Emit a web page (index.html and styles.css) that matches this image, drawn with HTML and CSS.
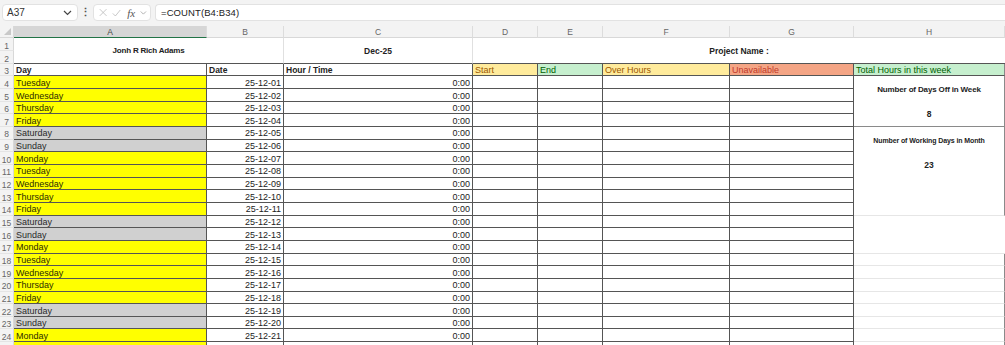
FILE: index.html
```html
<!DOCTYPE html>
<html>
<head>
<meta charset="utf-8">
<link rel="stylesheet" href="styles.css">
</head>
<body>
<div class="topbar">
  <div class="namebox"><span>A37</span>
    <svg class="chev" width="9" height="6" viewBox="0 0 9 6"><path d="M1 1l3.5 3.5L8 1" fill="none" stroke="#444" stroke-width="1.2"/></svg>
  </div>
  <div class="dots">⋮</div>
  <div class="fxbox">
    <svg width="11" height="11" viewBox="0 0 11 11"><path d="M1 1l9 9M10 1l-9 9" stroke="#b5b5b5" stroke-width="1"/></svg>
    <svg width="12" height="10" viewBox="0 0 12 10"><path d="M1 5.5l3.5 3.5L11 1" fill="none" stroke="#b5b5b5" stroke-width="1"/></svg>
    <span class="fx">fx</span>
    <svg width="9" height="6" viewBox="0 0 9 6"><path d="M1 1l3.5 3.5L8 1" fill="none" stroke="#999" stroke-width="1"/></svg>
  </div>
  <div class="formula">=COUNT(B4:B34)</div>
</div>
<div class="sheet">
  <div class="corner"><span class="tri"></span></div>
  <div class="ch sel">A</div><div class="ch">B</div><div class="ch">C</div><div class="ch">D</div><div class="ch">E</div><div class="ch">F</div><div class="ch">G</div><div class="ch last">H</div>

  <div class="rh">1</div>
  <div class="title t-name">Jonh R Rich Adams</div>
  <div class="title t-month">Dec-25</div>
  <div class="title t-proj">Project Name :</div>
  <div class="rh">2</div>

  <div class="rh">3</div>
  <div class="c hd">Day</div><div class="c hd">Date</div><div class="c hd">Hour / Time</div>
  <div class="c neutral">Start</div><div class="c good">End</div><div class="c neutral">Over Hours</div><div class="c bad">Unavailable</div><div class="c good hlast">Total Hours in this week</div>

  <div class="rh">4</div><div class="c day wk">Tuesday</div><div class="c num">25-12-01</div><div class="c num">0:00</div><div class="c"></div><div class="c"></div><div class="c"></div><div class="c"></div>
  <div class="h box span2 lbl">Number of Days Off in Week</div>
  <div class="rh">5</div><div class="c day wk">Wednesday</div><div class="c num">25-12-02</div><div class="c num">0:00</div><div class="c"></div><div class="c"></div><div class="c"></div><div class="c"></div>
  <div class="rh">6</div><div class="c day wk">Thursday</div><div class="c num">25-12-03</div><div class="c num">0:00</div><div class="c"></div><div class="c"></div><div class="c"></div><div class="c"></div>
  <div class="h box span2 val closed">8</div>
  <div class="rh">7</div><div class="c day wk">Friday</div><div class="c num">25-12-04</div><div class="c num">0:00</div><div class="c"></div><div class="c"></div><div class="c"></div><div class="c"></div>
  <div class="rh">8</div><div class="c day we">Saturday</div><div class="c num">25-12-05</div><div class="c num">0:00</div><div class="c"></div><div class="c"></div><div class="c"></div><div class="c"></div>
  <div class="h box span2 lbl small">Number of Working Days in Month</div>
  <div class="rh">9</div><div class="c day we">Sunday</div><div class="c num">25-12-06</div><div class="c num">0:00</div><div class="c"></div><div class="c"></div><div class="c"></div><div class="c"></div>
  <div class="rh">10</div><div class="c day wk">Monday</div><div class="c num">25-12-07</div><div class="c num">0:00</div><div class="c"></div><div class="c"></div><div class="c"></div><div class="c"></div>
  <div class="h box span2 val">23</div>
  <div class="rh">11</div><div class="c day wk">Tuesday</div><div class="c num">25-12-08</div><div class="c num">0:00</div><div class="c"></div><div class="c"></div><div class="c"></div><div class="c"></div>
  <div class="rh">12</div><div class="c day wk">Wednesday</div><div class="c num">25-12-09</div><div class="c num">0:00</div><div class="c"></div><div class="c"></div><div class="c"></div><div class="c"></div>
  <div class="h box span3 grid"></div>
  <div class="rh">13</div><div class="c day wk">Thursday</div><div class="c num">25-12-10</div><div class="c num">0:00</div><div class="c"></div><div class="c"></div><div class="c"></div><div class="c"></div>
  <div class="rh">14</div><div class="c day wk">Friday</div><div class="c num">25-12-11</div><div class="c num">0:00</div><div class="c"></div><div class="c"></div><div class="c"></div><div class="c"></div>
  <div class="rh">15</div><div class="c day we">Saturday</div><div class="c num">25-12-12</div><div class="c num">0:00</div><div class="c"></div><div class="c"></div><div class="c"></div><div class="c"></div>
  <div class="h span3 grid"></div>
  <div class="rh">16</div><div class="c day we">Sunday</div><div class="c num">25-12-13</div><div class="c num">0:00</div><div class="c"></div><div class="c"></div><div class="c"></div><div class="c"></div>
  <div class="rh">17</div><div class="c day wk">Monday</div><div class="c num">25-12-14</div><div class="c num">0:00</div><div class="c"></div><div class="c"></div><div class="c"></div><div class="c"></div>
  <div class="rh">18</div><div class="c day wk">Tuesday</div><div class="c num">25-12-15</div><div class="c num">0:00</div><div class="c"></div><div class="c"></div><div class="c"></div><div class="c"></div><div class="h box grid"></div>
  <div class="rh">19</div><div class="c day wk">Wednesday</div><div class="c num">25-12-16</div><div class="c num">0:00</div><div class="c"></div><div class="c"></div><div class="c"></div><div class="c"></div><div class="h box grid"></div>
  <div class="rh">20</div><div class="c day wk">Thursday</div><div class="c num">25-12-17</div><div class="c num">0:00</div><div class="c"></div><div class="c"></div><div class="c"></div><div class="c"></div><div class="h box grid"></div>
  <div class="rh">21</div><div class="c day wk">Friday</div><div class="c num">25-12-18</div><div class="c num">0:00</div><div class="c"></div><div class="c"></div><div class="c"></div><div class="c"></div><div class="h box grid"></div>
  <div class="rh">22</div><div class="c day we">Saturday</div><div class="c num">25-12-19</div><div class="c num">0:00</div><div class="c"></div><div class="c"></div><div class="c"></div><div class="c"></div><div class="h box grid"></div>
  <div class="rh">23</div><div class="c day we">Sunday</div><div class="c num">25-12-20</div><div class="c num">0:00</div><div class="c"></div><div class="c"></div><div class="c"></div><div class="c"></div><div class="h box grid"></div>
  <div class="rh">24</div><div class="c day wk">Monday</div><div class="c num">25-12-21</div><div class="c num">0:00</div><div class="c"></div><div class="c"></div><div class="c"></div><div class="c"></div><div class="h box grid"></div>
  <div class="rh"></div><div class="c day wk"></div><div class="c num"></div><div class="c num"></div><div class="c"></div><div class="c"></div><div class="c"></div><div class="c"></div><div class="h box grid"></div>
</div>
</body>
</html>
```
FILE: styles.css
```css
* { box-sizing: border-box; }
html, body { margin: 0; padding: 0; }
body {
  width: 1005px;
  height: 345px;
  overflow: hidden;
  background: #fff;
  font-family: "Liberation Sans", Arial, sans-serif;
  color: #222;
}

/* ---------- formula bar ---------- */
.topbar {
  height: 26px;
  background: #f3f3f3;
  display: flex;
  align-items: flex-start;
  padding: 4px 0 0 2px;
}
.namebox {
  width: 76px;
  height: 17px;
  background: #fff;
  border: 1px solid #e2e2e2;
  border-radius: 4px;
  display: flex;
  align-items: center;
  justify-content: space-between;
  padding: 0 5px 0 4px;
  font-size: 10px;
  color: #333;
}
.dots {
  width: 15px;
  text-align: center;
  font-size: 11px;
  line-height: 17px;
  color: #555;
  font-weight: bold;
}
.fxbox {
  width: 58px;
  height: 17px;
  background: #fff;
  border: 1px solid #e2e2e2;
  border-radius: 4px;
  display: flex;
  align-items: center;
  gap: 5px;
  padding: 0 3px 0 5px;
}
.fx {
  font-family: "Liberation Serif", serif;
  font-style: italic;
  font-size: 11px;
  color: #555;
  margin-left: 1px;
}
.formula {
  flex: 1;
  margin-left: 4px;
  height: 17px;
  background: #fff;
  border: 1px solid #e2e2e2;
  border-right: none;
  border-radius: 4px 0 0 4px;
  padding-left: 5px;
  font-size: 9.5px;
  line-height: 15px;
  letter-spacing: 0.1px;
  color: #222;
}

/* ---------- sheet grid ---------- */
.sheet {
  display: grid;
  grid-template-columns: 14px 193px 77px 189px 65px 65px 127px 124px 151px;
  grid-template-rows: 12.4px repeat(25, 12.67px);
  font-size: 9px;
}
.corner {
  background: #f3f3f3;
  border-right: 1px solid #d8d8d8;
  border-bottom: 1px solid #d8d8d8;
  position: relative;
}
.tri {
  position: absolute;
  right: 2px;
  bottom: 2px;
  width: 0;
  height: 0;
  border-left: 7px solid transparent;
  border-bottom: 7px solid #c8c8c8;
}
.ch {
  background: #f3f3f3;
  border-right: 1px solid #dcdcdc;
  border-bottom: 1px solid #d8d8d8;
  text-align: center;
  color: #666;
  font-size: 8.5px;
  line-height: 12px;
}
.ch.sel {
  background: #d6d6d6;
  border-bottom: 1px solid #217346;
  color: #444;
}
.rh {
  background: #f3f3f3;
  border-right: 1px solid #d8d8d8;
  border-bottom: 1px solid #e4e4e4;
  text-align: center;
  color: #666;
  font-size: 8.5px;
  line-height: 12px;
  padding-top: 1.5px;
}

.title {
  grid-row: span 2;
  display: flex;
  align-items: center;
  justify-content: center;
  font-weight: bold;
  font-size: 8.5px;
  color: #222;
  border-right: 1px solid #e0e0e0;
  border-bottom: 1px solid #555;
}
.t-name { grid-column: span 2; font-size: 8px; letter-spacing: -0.2px; }
.t-month { grid-column: span 1; }
.t-proj { grid-column: span 5; border-right: none; }

.c {
  border-right: 1px solid #555;
  border-bottom: 1px solid #555;
  padding: 1.5px 2px 0;
  line-height: 11px;
  white-space: nowrap;
  overflow: hidden;
  color: #222;
}
.hd { font-weight: bold; font-size: 8.5px; }
.neutral { background: #ffeb9c; color: #9c5700; }
.good { background: #c6efce; color: #006100; }
.bad { background: #f4a585; color: #c0392b; }
.hlast { border-right: 1px solid #888; }
.day.wk { background: #ffff00; color: #2d2d00; }
.day.we { background: #d0d0d0; color: #2a2a2a; }
.num { text-align: right; }

.h {
  border-right: 1px solid #8a8a8a;
  display: flex;
  align-items: center;
  justify-content: center;
  font-weight: bold;
  color: #222;
  padding-top: 1px;
}
.span2 { grid-row: span 2; }
.span3 { grid-row: span 3; }
.lbl { font-size: 8px; letter-spacing: -0.15px; }
.lbl.small { font-size: 7px; letter-spacing: -0.1px; }
.val { font-size: 8.5px; }
.closed { border-bottom: 1px solid #8a8a8a; }
.grid { border-bottom: 1px solid #e6e6e6; }
.h.span3:not(.box) { border-right: none; }
```
